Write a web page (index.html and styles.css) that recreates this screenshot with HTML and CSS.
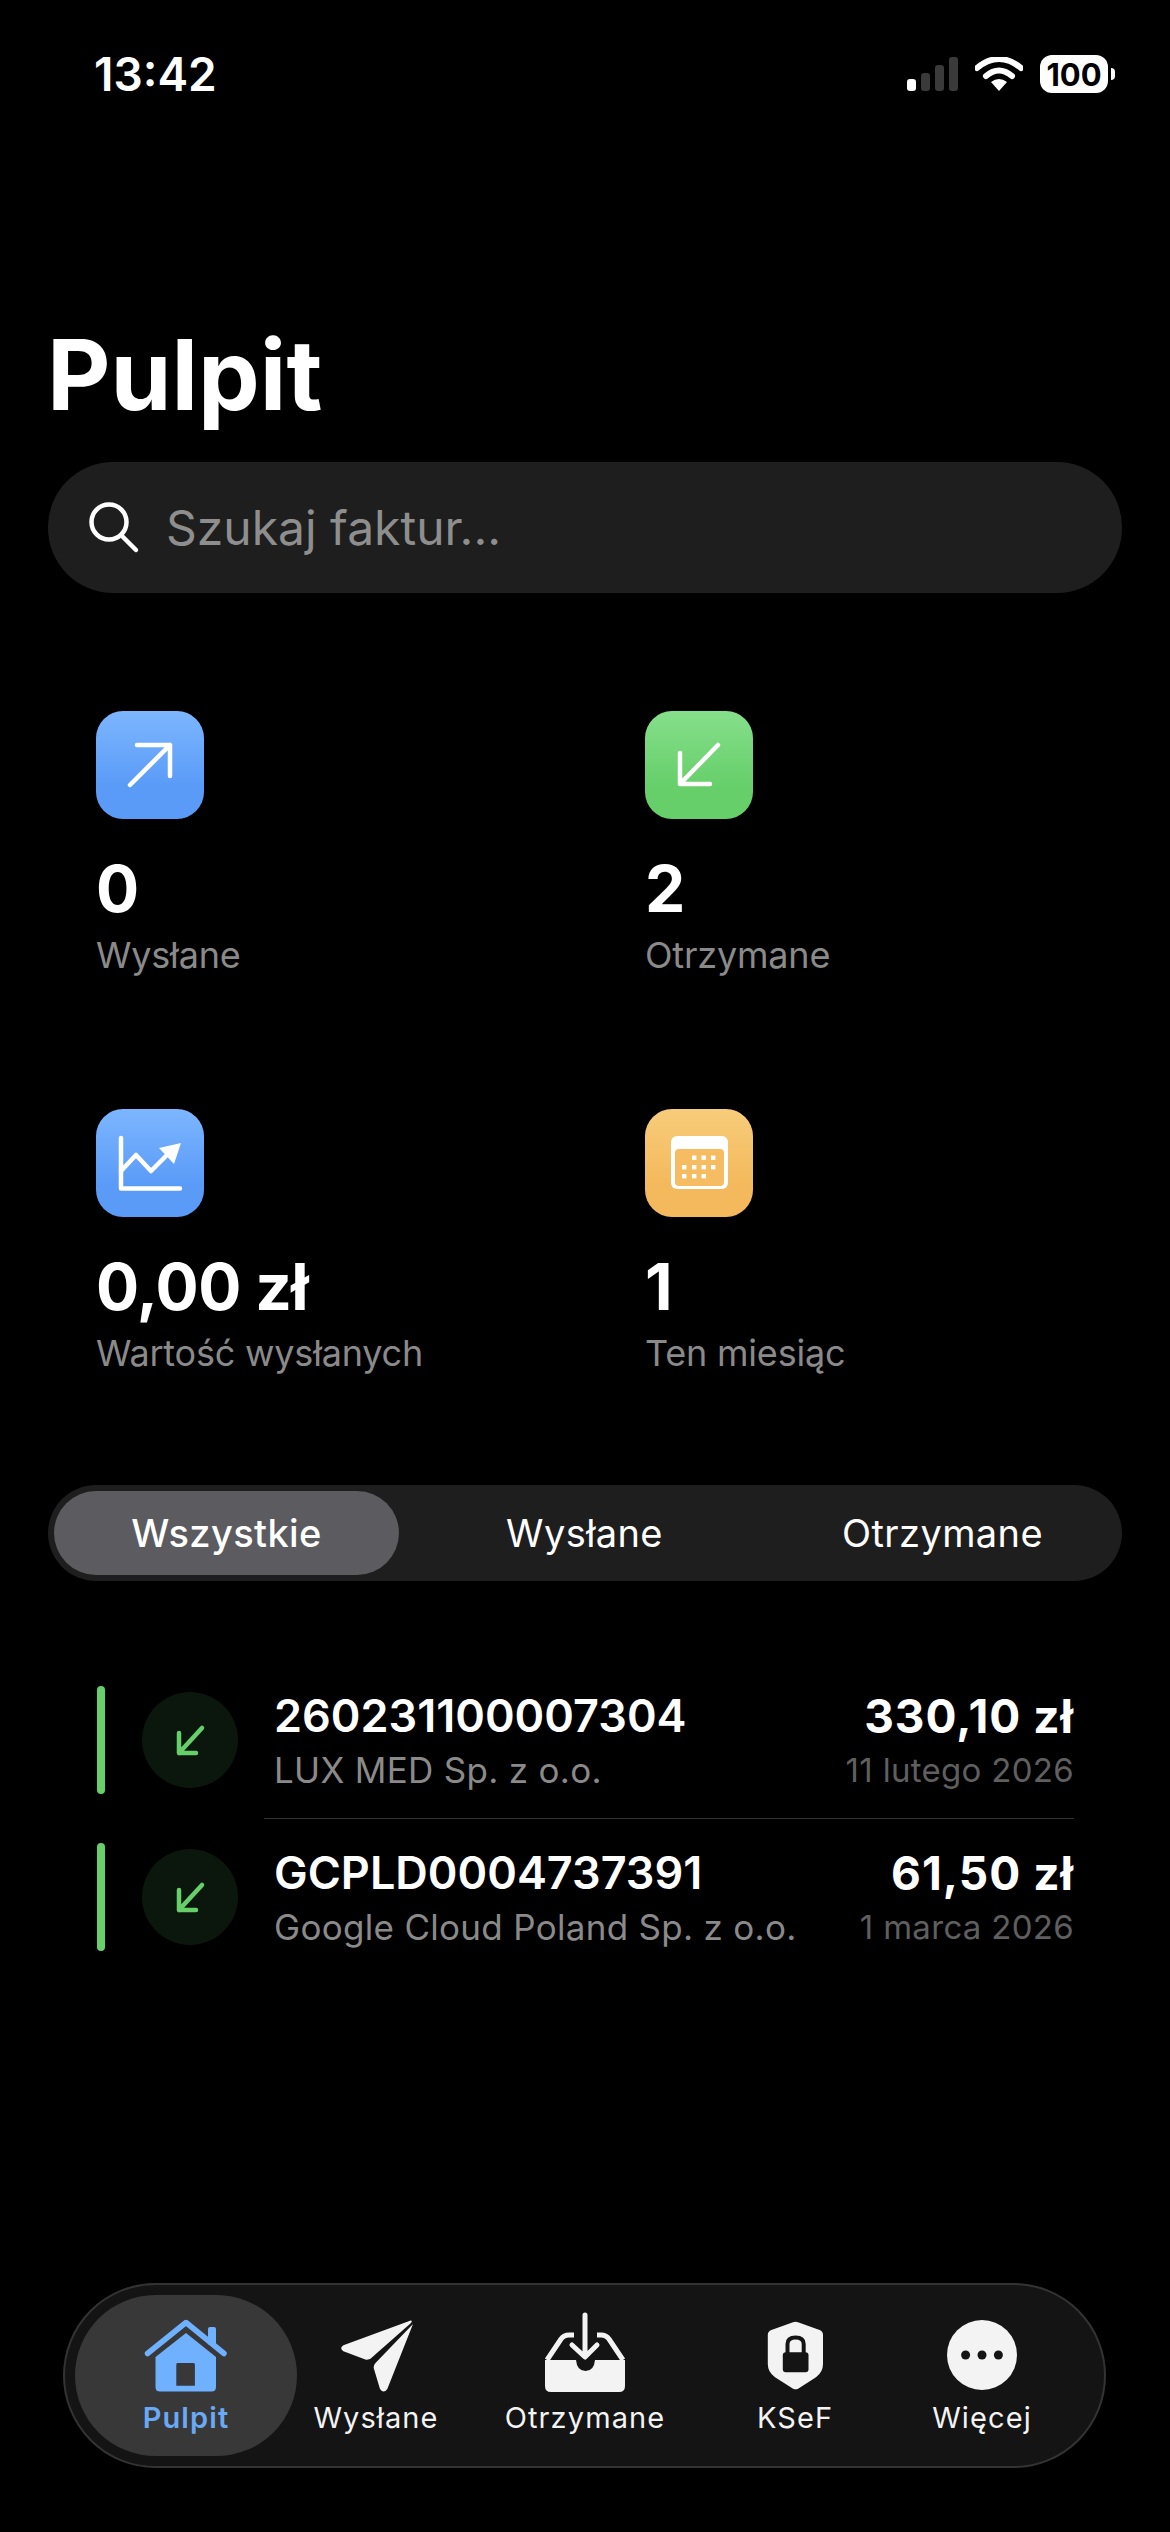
FILE: index.html
```html
<!DOCTYPE html>
<html lang="pl">
<head>
    <meta charset="UTF-8">
    <meta name="viewport" content="width=device-width, initial-scale=1.0">
    <title>Pulpit</title>
    <link rel="stylesheet" href="styles.css">
</head>
<body>

    <!-- Status bar -->
    <div class="status">
        <span class="time">13:42</span>
        <div class="status-icons">
            <div class="signal">
                <span class="bar on b1"></span>
                <span class="bar b2"></span>
                <span class="bar b3"></span>
                <span class="bar b4"></span>
            </div>
            <svg class="wifi" viewBox="0 0 48 34">
                <path d="M2 11 Q24 -7 46 11" fill="none" stroke="#fff" stroke-width="6" stroke-linecap="round"/>
                <path d="M11 19 Q24 8 37 19" fill="none" stroke="#fff" stroke-width="6" stroke-linecap="round"/>
                <path d="M16 25 Q24 19 32 25 L24 34 Z" fill="#fff"/>
            </svg>
            <div class="battery"><span>100</span></div>
            <span class="battery-nub"></span>
        </div>
    </div>

    <h1 class="title">Pulpit</h1>

    <!-- Search -->
    <div class="search">
        <svg class="search-icon" viewBox="0 0 52 52">
            <circle cx="21" cy="20" r="17.5" fill="none" stroke="#fff" stroke-width="4.5"/>
            <path d="M34 34 L48 48" stroke="#fff" stroke-width="4.5" stroke-linecap="round"/>
        </svg>
        <span>Szukaj faktur...</span>
    </div>

    <!-- Stats -->
    <div class="stats">
        <div class="stat">
            <div class="stat-icon blue">
                <svg viewBox="0 0 108 108"><path d="M34 74 L74 34 M41 34 H74 V65" fill="none" stroke="#fff" stroke-width="4.5" stroke-linecap="round" stroke-linejoin="round"/></svg>
            </div>
            <div class="stat-value">0</div>
            <div class="stat-label">Wysłane</div>
        </div>
        <div class="stat">
            <div class="stat-icon green">
                <svg viewBox="0 0 108 108"><path d="M73 34 L35 73 M35 42 V73 H65" fill="none" stroke="#fff" stroke-width="4.5" stroke-linecap="round" stroke-linejoin="round"/></svg>
            </div>
            <div class="stat-value">2</div>
            <div class="stat-label">Otrzymane</div>
        </div>
        <div class="stat">
            <div class="stat-icon blue">
                <svg viewBox="0 0 108 108">
                    <path d="M25 29 V79.500 H84" fill="none" stroke="#fff" stroke-width="4.5" stroke-linecap="round" stroke-linejoin="round"/>
                    <path d="M25 62 L40 46 L55 62 L70 47" fill="none" stroke="#fff" stroke-width="4.500" stroke-linecap="round" stroke-linejoin="round"/>
                    <path d="M85 34 L63 39 L78 55 Z" fill="#fff"/>
                </svg>
            </div>
            <div class="stat-value">0,00 zł</div>
            <div class="stat-label">Wartość wysłanych</div>
        </div>
        <div class="stat">
            <div class="stat-icon orange">
                <svg viewBox="0 0 108 108">
                    <rect x="26" y="27" width="57" height="53" rx="6" fill="#fff"/>
                    <rect x="30" y="40" width="49" height="37" rx="4" fill="#f5bc62"/>
                    <g fill="#fff">
                        <rect x="47" y="46.500" width="4.400" height="4.400"/>
                        <rect x="56.500" y="46.500" width="4.400" height="4.400"/>
                        <rect x="66" y="46.500" width="4.400" height="4.400"/>
                        <rect x="37" y="56" width="4.400" height="4.400"/>
                        <rect x="47" y="56" width="4.400" height="4.400"/>
                        <rect x="56.500" y="56" width="4.400" height="4.400"/>
                        <rect x="66" y="56" width="4.400" height="4.400"/>
                        <rect x="37" y="65" width="4.400" height="4.400"/>
                        <rect x="47" y="65" width="4.400" height="4.400"/>
                        <rect x="56.500" y="65" width="4.400" height="4.400"/>
                    </g>
                </svg>
            </div>
            <div class="stat-value">1</div>
            <div class="stat-label">Ten miesiąc</div>
        </div>
    </div>

    <!-- Filter -->
    <div class="segment">
        <div class="segment-item active">Wszystkie</div>
        <div class="segment-item">Wysłane</div>
        <div class="segment-item">Otrzymane</div>
    </div>

    <!-- Invoices -->
    <div class="list">
        <div class="row">
            <span class="row-bar"></span>
            <div class="row-icon">
                <svg viewBox="0 0 96 96"><path d="M60 36 L37 61 M37 41 V61 H54" fill="none" stroke="#66cf6a" stroke-width="4.500" stroke-linecap="round" stroke-linejoin="round"/></svg>
            </div>
            <div class="row-main">
                <div class="row-title">260231100007304</div>
                <div class="row-sub">LUX MED Sp. z o.o.</div>
            </div>
            <div class="row-side">
                <div class="row-amount">330,10 zł</div>
                <div class="row-date">11 lutego 2026</div>
            </div>
        </div>
        <div class="row-sep"></div>
        <div class="row">
            <span class="row-bar"></span>
            <div class="row-icon">
                <svg viewBox="0 0 96 96"><path d="M60 36 L37 61 M37 41 V61 H54" fill="none" stroke="#66cf6a" stroke-width="4.500" stroke-linecap="round" stroke-linejoin="round"/></svg>
            </div>
            <div class="row-main">
                <div class="row-title">GCPLD0004737391</div>
                <div class="row-sub">Google Cloud Poland Sp. z o.o.</div>
            </div>
            <div class="row-side">
                <div class="row-amount">61,50 zł</div>
                <div class="row-date">1 marca 2026</div>
            </div>
        </div>
    </div>

    <!-- Tab bar -->
    <nav class="tabbar">
        <div class="tab active">
            <div class="tab-icon">
                <svg width="88" height="77" viewBox="0 0 88 77">
                    <path d="M5.500 36.500 L44 5.500 L82 36.500" fill="none" stroke="#6fb0ff" stroke-width="5.500" stroke-linecap="round" stroke-linejoin="round"/>
                    <rect x="66" y="10" width="8" height="18" rx="2" fill="#6fb0ff"/>
                    <path fill-rule="evenodd" d="M44 16 L74 40 V70 Q74 74.500 69.500 74.500 H18 Q13.500 74.500 13.500 70 V40 Z M35.500 46 Q34.300 46 34.300 47.500 V68.700 H52.900 V47.500 Q52.900 46 51.500 46 Z" fill="#6fb0ff"/>
                </svg>
            </div>
            <span class="tab-label">Pulpit</span>
        </div>
        <div class="tab">
            <div class="tab-icon">
                <svg width="77" height="75" viewBox="0 0 77 75">
                    <path d="M72 2.700 Q75 2 73 5 L33 40.300 Q31 42 28 41.700 L5.400 33.300 Q1 30 5.400 27.300 Z" fill="#f3f3f3"/>
                    <path d="M75 6 L49.300 71 Q45.700 76 42 71 L35.700 50 Q35.500 47 37.500 45 Z" fill="#f3f3f3"/>
                </svg>
            </div>
            <span class="tab-label">Wysłane</span>
        </div>
        <div class="tab">
            <div class="tab-icon">
                <svg width="92" height="94" viewBox="0 0 92 94">
                    <path d="M6 52 H37 Q38 63 46.500 63 Q55 63 56 52 H86 V78 Q86 84 80 84 H12 Q6 84 6 78 Z" fill="#f3f3f3"/>
                    <path d="M8 52 L22 31 Q25 27 30 27 H35 M58 27 H62 Q67 27 70 31 L84 52" fill="none" stroke="#f3f3f3" stroke-width="5"/>
                    <path d="M46 7 V47 M33 37 L46 49 L58 37" fill="none" stroke="#f3f3f3" stroke-width="5" stroke-linecap="round" stroke-linejoin="round"/>
                </svg>
            </div>
            <span class="tab-label">Otrzymane</span>
        </div>
        <div class="tab">
            <div class="tab-icon">
                <svg width="59" height="71" viewBox="0 0 59 71">
                    <path d="M27 2.200 Q29.600 1.300 32 2.200 L53.600 10 Q57 11.500 57 14.700 V44 Q57 52 50 57.300 L32.100 68.700 Q29.600 70 27.100 68.700 L9 57.300 Q1.800 52 1.800 44 V14.700 Q1.800 11.500 5.400 10 Z" fill="#f3f3f3"/>
                    <rect x="16.800" y="32.300" width="25.700" height="20" rx="3" fill="#141414"/>
                    <path d="M21.500 33 V24 Q21.500 17.500 29.600 17.500 Q37.700 17.500 37.700 24 V33" fill="none" stroke="#141414" stroke-width="4"/>
                </svg>
            </div>
            <span class="tab-label">KSeF</span>
        </div>
        <div class="tab">
            <div class="tab-icon">
                <svg width="70" height="70" viewBox="0 0 70 70">
                    <circle cx="35" cy="35" r="35" fill="#f3f3f3"/>
                    <circle cx="18.600" cy="35" r="4.500" fill="#141414"/>
                    <circle cx="35" cy="35" r="4.500" fill="#141414"/>
                    <circle cx="51.400" cy="35" r="4.500" fill="#141414"/>
                </svg>
            </div>
            <span class="tab-label">Więcej</span>
        </div>
    </nav>

</body>
</html>
```

FILE: styles.css
```css
* {
    box-sizing: border-box;
}

body {
    margin: 0;
    width: 1170px;
    height: 2532px;
    overflow: hidden;
    background-color: #000;
    color: #fff;
    font-family: Inter, "Noto Sans", sans-serif;
    display: flex;
    flex-direction: column;
}

/* Status bar */
.status {
    display: flex;
    justify-content: space-between;
    align-items: center;
    padding: 55px 55px 0 94px;
}
.time {
    font-size: 46px;
    line-height: 38px;
    font-weight: 600;
}
.status-icons {
    display: flex;
    align-items: center;
}
.signal {
    display: flex;
    align-items: flex-end;
    gap: 5px;
    height: 34px;
    margin-right: 17px;
}
.bar {
    width: 9px;
    background-color: #3a3a3a;
    border-radius: 3px;
}
.bar.on { background-color: #fff; }
.b1 { height: 12px; }
.b2 { height: 18px; }
.b3 { height: 26px; }
.b4 { height: 34px; }
.wifi {
    width: 48px;
    height: 34px;
    margin-right: 17px;
}
.battery {
    width: 68px;
    height: 38px;
    background-color: #fff;
    border-radius: 12px;
    display: flex;
    justify-content: center;
    align-items: center;
    color: #000;
    font-size: 31px;
    font-weight: 700;
}
.battery-nub {
    width: 4px;
    height: 12px;
    margin-left: 3px;
    background-color: #fff;
    border-radius: 0 4px 4px 0;
}

/* Title */
.title {
    margin: 232px 0 0 47px;
    font-size: 98px;
    line-height: 100px;
    font-weight: 700;
}

/* Search */
.search {
    display: flex;
    align-items: center;
    gap: 26px;
    height: 131px;
    margin: 37px 48px 0;
    padding-left: 40px;
    background-color: #1e1e1e;
    border-radius: 65px;
    color: #8e8e8e;
    font-size: 48px;
}
.search-icon {
    width: 52px;
    height: 52px;
}

/* Stats */
.stats {
    display: grid;
    grid-template-columns: 549px 1fr;
    grid-template-rows: 398px 376px;
    margin: 118px 0 0 96px;
}
.stat-icon {
    width: 108px;
    height: 108px;
    border-radius: 27px;
}
.stat-icon svg {
    display: block;
}
.stat-icon.blue { background: linear-gradient(#7db6ff, #5a9bf8 70%); }
.stat-icon.green { background: linear-gradient(#86df8b, #66cf6a 70%); }
.stat-icon.orange { background: linear-gradient(#f7cc7a, #f4b95c 70%); }
.stat-value {
    margin-top: 38px;
    font-size: 64px;
    line-height: 64px;
    font-weight: 700;
    letter-spacing: -0.6px;
}
.stat-label {
    margin-top: 12px;
    font-size: 36px;
    line-height: 44px;
    letter-spacing: -0.2px;
    color: #8a8a8a;
}

/* Filter */
.segment {
    display: grid;
    grid-template-columns: repeat(3, 345px);
    gap: 13px;
    height: 96px;
    margin: 0 48px;
    padding: 6px;
    background-color: #1e1e1e;
    border-radius: 48px;
}
.segment-item {
    display: flex;
    justify-content: center;
    align-items: center;
    font-size: 38px;
    letter-spacing: 0.4px;
}
.segment-item.active {
    background-color: #5b5b60;
    border-radius: 42px;
    font-weight: 500;
}

/* Invoices */
.list {
    margin: 105px 96px 0 97px;
}
.row {
    display: flex;
    align-items: flex-start;
    height: 108px;
}
.row-bar {
    width: 8px;
    height: 108px;
    background-color: #66cf6a;
    border-radius: 4px;
}
.row-icon {
    width: 96px;
    height: 96px;
    margin: 6px 36px 0 37px;
    background-color: #0b170c;
    border-radius: 50%;
}
.row-main {
    flex: 1;
    padding-top: 4px;
}
.row-side {
    padding-top: 4px;
    text-align: right;
}
.row-title {
    font-size: 45px;
    line-height: 52px;
    font-weight: 600;
}
.row-amount {
    font-size: 46px;
    line-height: 52px;
    font-weight: 700;
    letter-spacing: 1px;
}
.row-sub {
    margin-top: 7px;
    font-size: 35px;
    line-height: 42px;
    letter-spacing: 0.3px;
    color: #8a8a8a;
}
.row-date {
    margin-top: 7px;
    font-size: 33px;
    line-height: 42px;
    letter-spacing: 0.3px;
    color: #5f5f5f;
}
.row-sep {
    height: 1px;
    margin: 24px 0 24px 167px;
    background-color: #333;
}

/* Tab bar */
.tabbar {
    display: grid;
    grid-template-columns: 222px 158px 260px 160px 214px;
    width: 1043px;
    height: 185px;
    margin: auto 0 64px 63px;
    padding: 10px;
    background-color: #141414;
    border: 2px solid #333;
    border-radius: 93px;
}
.tab {
    display: flex;
    flex-direction: column;
    align-items: center;
    padding-top: 20px;
}
.tab.active {
    background-color: #383838;
    border-radius: 82px;
    color: #6aa9f5;
}
.tab-icon {
    display: flex;
    justify-content: center;
    align-items: center;
    height: 80px;
}
.tab-icon svg {
    flex: none;
}
.tab-label {
    margin-top: 6px;
    font-size: 29px;
    line-height: 34px;
    letter-spacing: 1.1px;
    color: #f3f3f3;
}
.tab.active .tab-label {
    color: #6aa9f5;
    font-weight: 600;
}
```
